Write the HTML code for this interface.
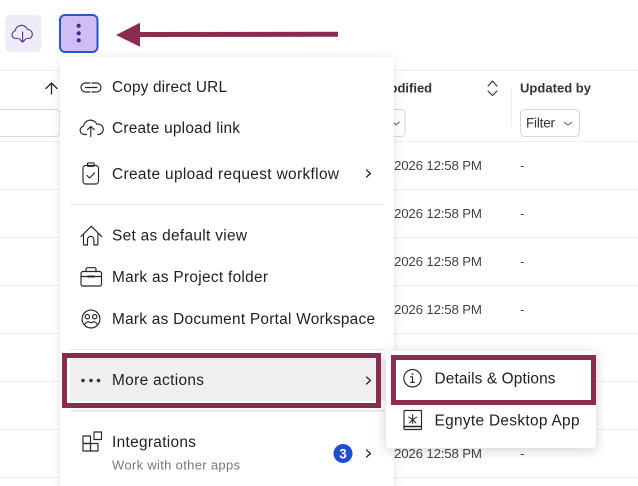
<!DOCTYPE html>
<html><head><meta charset="utf-8">
<style>
html,body{margin:0;padding:0;background:#fff;width:638px;height:486px;overflow:hidden}
svg{display:block;position:absolute;left:0;top:0;filter:blur(.3px)}
text{font-family:"Liberation Sans",sans-serif;fill:#1f1f22}
.m{font-size:15.4px}
.i{fill:none;stroke:#26262a;stroke-width:1.15;stroke-linecap:round;stroke-linejoin:round}
</style></head><body>
<svg width="638" height="486" viewBox="0 0 638 486" xmlns="http://www.w3.org/2000/svg">
<defs>
<filter id="s" x="-10%" y="-10%" width="120%" height="120%"><feDropShadow dx="0" dy="1" stdDeviation="5" flood-color="#000" flood-opacity=".11"/></filter>
<filter id="s2" x="-15%" y="-15%" width="130%" height="135%"><feDropShadow dx="0" dy="2" stdDeviation="6" flood-color="#000" flood-opacity=".18"/></filter>
</defs>
<!-- table lines -->
<g fill="#eeeef0">
<rect x="0" y="70" width="638" height="1"/>
<rect x="0" y="141" width="638" height="1"/>
<rect x="0" y="189" width="638" height="1"/>
<rect x="0" y="237" width="638" height="1"/>
<rect x="0" y="285" width="638" height="1"/>
<rect x="0" y="333" width="638" height="1"/>
<rect x="0" y="381" width="638" height="1"/>
<rect x="0" y="429" width="638" height="1"/>
<rect x="0" y="477" width="638" height="1"/>
<rect x="511" y="88" width="1" height="38"/>
</g>
<!-- top buttons -->
<rect x="5" y="15" width="36.500" height="37" rx="5" fill="#efebf7"/>
<g fill="none" stroke="#4a35a0" stroke-width="1.1" stroke-linecap="round" stroke-linejoin="round">
<path d="M18 38.500h-2.500a3.800 3.800 0 0 1-.5-7.500a6.500 6.500 0 0 1 12.500-1.500a4.700 4.700 0 0 1 2 9h-2.500"/>
<path d="M22.600 32v10M19.300 38.800l3.300 3.300 3.300-3.300"/>
</g>
<rect x="60" y="15" width="37.500" height="37" rx="5" fill="#d1bdf6" stroke="#2359c9" stroke-width="2"/>
<g fill="#4a3ea8" stroke="#1f2a80" stroke-width="1"><circle cx="78.700" cy="25.800" r="1.500"/><circle cx="78.700" cy="33.300" r="1.500"/><circle cx="78.700" cy="40.400" r="1.500"/></g>
<!-- arrow -->
<path d="M116 35L140 22.700V32L338 31.700V36.700L140 37V46.700Z" fill="#8a2c4f"/>
<!-- table header -->
<path d="M46 88.500L51.500 83 57 88.500M51.500 83.500V94" fill="none" stroke="#26262a" stroke-width="1.3" stroke-linecap="round" stroke-linejoin="round"/>
<rect x="-6" y="109.500" width="66" height="27" rx="4" fill="#fff" stroke="#d6d6da"/>
<text x="378.700" y="92.500" font-size="13" font-weight="700" style="fill:#333">Modified</text>
<path d="M488 86l4.500-5 4.500 5M488 91l4.500 4.500 4.500-4.500" fill="none" stroke="#333" stroke-width="1.100" stroke-linecap="round" stroke-linejoin="round"/>
<text x="520" y="92.500" font-size="13" font-weight="700" textLength="71" lengthAdjust="spacing" style="fill:#333">Updated by</text>
<rect x="380" y="109.500" width="25" height="27" rx="4" fill="#fff" stroke="#d6d6da"/>
<path d="M393 122l3 3 3.500-3" fill="none" stroke="#555" stroke-width="1"/>
<rect x="520.500" y="109.500" width="59" height="27" rx="4" fill="#fff" stroke="#d6d6da"/>
<text x="526" y="127.500" font-size="13.500" textLength="29" lengthAdjust="spacing" style="fill:#333">Filter</text>
<path d="M564 122l4 3 4-3" fill="none" stroke="#555" stroke-width="1"/>
<!-- rows -->
<g font-size="13.300">
<text x="394" y="170" textLength="88" lengthAdjust="spacing" style="fill:#444">2026 12:58 PM</text><text x="520" y="170" style="fill:#444">-</text>
<text x="394" y="218" textLength="88" lengthAdjust="spacing" style="fill:#444">2026 12:58 PM</text><text x="520" y="218" style="fill:#444">-</text>
<text x="394" y="266" textLength="88" lengthAdjust="spacing" style="fill:#444">2026 12:58 PM</text><text x="520" y="266" style="fill:#444">-</text>
<text x="394" y="314" textLength="88" lengthAdjust="spacing" style="fill:#444">2026 12:58 PM</text><text x="520" y="314" style="fill:#444">-</text>
<text x="394" y="458" textLength="88" lengthAdjust="spacing" style="fill:#444">2026 12:58 PM</text><text x="520" y="458" style="fill:#444">-</text>
</g>
<!-- main menu -->
<rect x="60" y="57" width="334" height="440" rx="4" fill="#fff" filter="url(#s)"/>
<rect x="70" y="204" width="314" height="1" fill="#e4e4e6"/>
<rect x="70" y="349" width="314" height="1" fill="#e4e4e6"/>
<rect x="70" y="410" width="314" height="1.500" fill="#e4e4e6"/>
<rect x="70" y="358" width="315" height="43" rx="4" fill="#efefef"/>
<!-- menu text -->
<text class="m" x="112" y="92" textLength="115" lengthAdjust="spacing">Copy direct URL</text>
<text class="m" x="112" y="133" textLength="128" lengthAdjust="spacing">Create upload link</text>
<text class="m" x="112" y="179" textLength="227" lengthAdjust="spacing">Create upload request workflow</text>
<text class="m" x="112" y="240.500" textLength="135" lengthAdjust="spacing">Set as default view</text>
<text class="m" x="112" y="282" textLength="156" lengthAdjust="spacing">Mark as Project folder</text>
<text class="m" x="112" y="324" textLength="263" lengthAdjust="spacing">Mark as Document Portal Workspace</text>
<text class="m" x="112" y="385" textLength="92" lengthAdjust="spacing">More actions</text>
<text class="m" x="112" y="447" textLength="84" lengthAdjust="spacing">Integrations</text>
<text x="112" y="469.500" font-size="13" textLength="128" lengthAdjust="spacing" style="fill:#77777c">Work with other apps</text>
<!-- icons -->
<g class="i">
<path d="M90 83h-4.500a4.500 4.500 0 0 0 0 9h4.500M92 83h4.500a4.500 4.500 0 0 1 0 9h-4.500"/>
<path d="M85.500 87.500h11.500"/>
<path d="M86.500 134.500h-2.500a4.200 4.200 0 0 1-.5-8.300a7 7 0 0 1 13.300-2a5.300 5.300 0 0 1 2.500 10.300h-1.500"/>
<path d="M90.800 136.700v-10M87.500 129.700l3.300-3.300 3.300 3.300"/>
<rect x="83" y="165.500" width="15.500" height="18.500" rx="2.500"/>
<path d="M87.500 165.500v-1.800a.8.800 0 0 1 .8-.8h5a.8.8 0 0 1 .8.8v1.800a.8.800 0 0 1-.8.800h-5a.8.800 0 0 1-.8-.8z"/>
<path d="M87 175.500l2.500 2.500 5-5"/>
<path d="M81 236.500l10.300-10.300 10.500 10.500M83.500 234v10a1 1 0 0 0 1 1h3v-5.500a3.200 3.200 0 0 1 6.400 0v5.500h3a1 1 0 0 0 1-1v-10"/>
<rect x="81" y="271.500" width="20.500" height="14.500" rx="2"/>
<path d="M86 271.500v-2.300a1.500 1.500 0 0 1 1.500-1.500h7a1.500 1.500 0 0 1 1.500 1.500v2.300M81 276.500h20.500"/>
<circle cx="91" cy="319" r="8.900"/>
<circle cx="87.300" cy="316.700" r="2.200"/><circle cx="94.700" cy="316.700" r="2.200"/>
<path d="M85 324c1.500-2.300 3-2.800 4.500-1.800 1 .7 2 .7 3 0 1.500-1 3-.5 4.500 1.800"/>
<rect x="83" y="436" width="7.500" height="7.500"/><rect x="83" y="443.500" width="7.500" height="7.500"/><rect x="90.500" y="443.500" width="7.500" height="7.500"/><rect x="94" y="432" width="7.500" height="7.500"/>
<path d="M366.500 170l4 3.500-4 3.500" stroke-width="1.300"/>
<path d="M366.500 377l4 3.500-4 3.500" stroke-width="1.300"/>
<path d="M366.500 450l4 3.500-4 3.500" stroke-width="1.300"/>
</g>
<rect x="87.500" y="275.500" width="7" height="2" fill="#26262a"/>
<g fill="#333338"><circle cx="83" cy="380.500" r="1.800"/><circle cx="91" cy="380.500" r="1.800"/><circle cx="98.500" cy="380.500" r="1.800"/></g>
<circle cx="343" cy="453.500" r="9.500" fill="#1f4fd0"/>
<text x="343" y="458.500" font-size="13.500" font-weight="700" text-anchor="middle" style="fill:#fff">3</text>
<!-- main red box -->
<rect x="64.500" y="355.500" width="314" height="50" fill="none" stroke="#8a2c4f" stroke-width="5"/>
<!-- submenu -->
<rect x="386" y="351" width="210" height="97" rx="4" fill="#fff" filter="url(#s2)"/>
<text class="m" x="434.500" y="383.500" textLength="121" lengthAdjust="spacing">Details &amp; Options</text>
<text class="m" x="434.500" y="425.700" textLength="145" lengthAdjust="spacing">Egnyte Desktop App</text>
<g class="i">
<circle cx="412.500" cy="378.300" r="8.700"/>
<path d="M410.500 376.800h2v5.500M410.500 382.300h4"/>
<rect x="404" y="410.500" width="17.500" height="19" rx="1"/>
<path d="M404 426.500h17.500" stroke-width="1.500"/>
<path d="M412.700 414.500v9M408.500 417l4.200 2.500 4.200-2.500M409.500 423l3.200-3.500 3.200 3.500" stroke-width="1"/>
</g>
<circle cx="412.500" cy="374" r=".9" fill="#26262a"/>
<rect x="393.500" y="357.500" width="200" height="45" fill="none" stroke="#8a2c4f" stroke-width="5"/>
</svg>
</body></html>
